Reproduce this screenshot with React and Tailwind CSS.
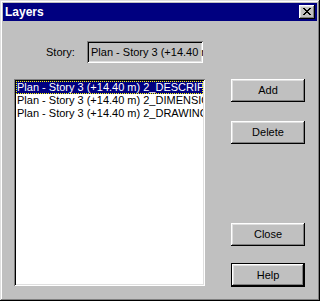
import React from "react";

const raised =
  "shadow-[inset_-1px_-1px_#000,inset_1px_1px_#fff,inset_-2px_-2px_#808080,inset_2px_2px_#dfdfdf]";
const sunken =
  "shadow-[inset_1px_1px_#808080,inset_-1px_-1px_#fff,inset_2px_2px_#000,inset_-2px_-2px_#dfdfdf]";

function Btn({ children, def, className = "" }) {
  if (def) {
    return (
      <div className={"border border-black " + className}>
        <div className={"h-[22px] w-full flex items-center justify-center bg-[#c0c0c0] " + raised}>
          {children}
        </div>
      </div>
    );
  }
  return (
    <div className={"h-[23px] flex items-center justify-center bg-[#c0c0c0] " + raised + " " + className}>
      {children}
    </div>
  );
}

export default function App() {
  const rows = [
    "Plan - Story 3 (+14.40 m) 2_DESCRIPTION",
    "Plan - Story 3 (+14.40 m) 2_DIMENSIONS",
    "Plan - Story 3 (+14.40 m) 2_DRAWING",
  ];
  return (
    <div
      className="w-[320px] h-[301px] bg-[#c0c0c0] p-[3px] text-[11px] text-black shadow-[inset_-1px_-1px_#000,inset_1px_1px_#dfdfdf,inset_-2px_-2px_#808080,inset_2px_2px_#fff] overflow-hidden"
      style={{ fontFamily: '"Liberation Sans", Arial, sans-serif' }}
    >
      <div className="h-[18px] bg-[#000080] flex items-center justify-between pl-[2px] pr-[2px]">
        <span className="text-white font-bold text-[12px] leading-none">Layers</span>
        <div className={"w-[16px] h-[14px] bg-[#c0c0c0] flex items-center justify-center " + raised}>
          <svg width="8" height="7" viewBox="0 0 8 7" className="-mt-[1px]">
            <path d="M0 0h2v1h1v1h2V1h1V0h2v1H7v1H6v1H5v1h1v1h1v1h1v1H6V6H5V5H3v1H2v1H0V6h1V5h1V4h1V3H2V2H1V1H0z" fill="#000" />
          </svg>
        </div>
      </div>
      <div className="flex pl-[11px] pt-[20px]">
        <div className="w-[191px] flex flex-col">
          <div className="flex items-center h-[22px] pl-[32px]">
            <span className="w-[30px]">Story:</span>
            <div className={"ml-[11px] w-[116px] h-[22px] bg-[#c0c0c0] flex items-center pl-[4px] overflow-hidden whitespace-nowrap " + sunken}>
              Plan - Story 3 (+14.40 m)
            </div>
          </div>
          <div className={"mt-[16px] h-[207px] bg-white p-[2px] overflow-hidden " + sunken}>
            {rows.map((r, i) => (
              <div
                key={i}
                className={
                  "h-[13px] leading-[13px] pl-[1px] whitespace-nowrap overflow-hidden " +
                  (i === 0 ? "bg-[#000080] text-white outline-1 outline-dotted outline-[#ffff00] -outline-offset-1" : "")
                }
              >
                {r}
              </div>
            ))}
          </div>
        </div>
        <div className="ml-[26px] w-[74px] pt-[38px] flex flex-col">
          <Btn>Add</Btn>
          <Btn className="mt-[19px]">Delete</Btn>
          <Btn className="mt-[79px]">Close</Btn>
          <Btn def className="mt-[17px]">Help</Btn>
        </div>
      </div>
    </div>
  );
}
